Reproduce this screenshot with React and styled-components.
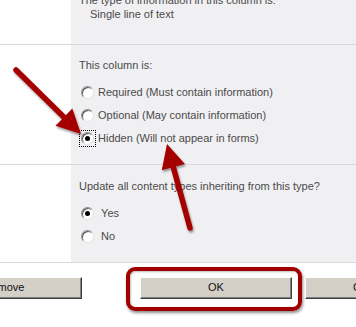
import React from "react";
import styled, { createGlobalStyle } from "styled-components";

const Global = createGlobalStyle`
  html, body { margin: 0; padding: 0; background: #fff; overflow: hidden; }
  body { font-family: "Liberation Sans", Tahoma, sans-serif; }
`;

const Page = styled.div`
  position: relative;
  width: 356px;
  height: 327px;
  overflow: hidden;
`;

const Scroll = styled.div`
  margin-top: -7px;
`;

const Section = styled.div`
  display: grid;
  grid-template-columns: 71px 1fr;
  height: ${(p) => p.$h}px;
  border-bottom: 1px solid #d9d9d9;
`;

const Side = styled.div`
  background: #fff;
`;

const Panel = styled.div`
  background: #f0f0f2;
  padding: ${(p) => p.$pt || 0}px 0 0 8px;
  font-size: 11px;
  color: #4a4a4a;
`;

const Line = styled.div`
  height: 14px;
  line-height: 14px;
  padding-left: ${(p) => p.$indent || 0}px;
  white-space: nowrap;
`;

const Options = styled.div`
  display: flex;
  flex-direction: column;
  gap: 9px;
  margin-top: ${(p) => p.$mt}px;
  padding-left: 2px;
`;

const Option = styled.label`
  display: flex;
  align-items: center;
  gap: 4px;
  height: 14px;
  white-space: nowrap;
`;

const Focus = styled.span`
  display: inline-flex;
  align-items: center;
  justify-content: center;
  width: 17px;
  height: 17px;
  margin: -2px;
  outline: ${(p) => (p.$focus ? "1px dotted #000" : "none")};
  outline-offset: -1px;
`;

const Radio = styled.span`
  position: relative;
  width: 11px;
  height: 11px;
  border-radius: 50%;
  border: 1px solid #8d8d8d;
  border-right-color: #e2e2e2;
  border-bottom-color: #e2e2e2;
  background: #fff;
  box-shadow: inset 1px 1px 0 #5a5a5a;
  &::after {
    content: "";
    display: ${(p) => (p.$on ? "block" : "none")};
    position: absolute;
    left: 3px;
    top: 3px;
    width: 5px;
    height: 5px;
    border-radius: 50%;
    background: #000;
  }
`;

const Buttons = styled.div`
  display: flex;
  padding-top: 14px;
  margin-left: -74px;
`;

const Button = styled.div`
  box-sizing: border-box;
  width: ${(p) => p.$w}px;
  margin-left: ${(p) => p.$ml || 0}px;
  height: 22px;
  line-height: 19px;
  text-align: center;
  font-size: 11px;
  color: #111;
  background: #d4d0c8;
  border: 1px solid #fff;
  border-right-color: #404040;
  border-bottom-color: #404040;
  box-shadow: inset -1px -1px 0 #808080;
  white-space: nowrap;
  overflow: hidden;
  flex-shrink: 0;
`;

const Highlight = styled.div`
  position: absolute;
  left: 126px;
  top: 267px;
  width: 176px;
  height: 44px;
  box-sizing: border-box;
  border: 4px solid #a10000;
  border-radius: 9px;
  box-shadow: 1px 2px 3px rgba(0, 0, 0, 0.45), inset 1px 1px 2px rgba(0, 0, 0, 0.25);
  pointer-events: none;
`;

const Overlay = styled.svg`
  position: absolute;
  left: 0;
  top: 0;
  pointer-events: none;
`;

const Arrow = ({ x1, y1, x2, y2 }) => {
  const dx = x2 - x1;
  const dy = y2 - y1;
  const len = Math.hypot(dx, dy);
  const ux = dx / len;
  const uy = dy / len;
  const hl = 24;
  const hw = 12;
  const bx = x2 - ux * hl;
  const by = y2 - uy * hl;
  const px = -uy * hw;
  const py = ux * hw;
  return (
    <g filter="url(#sh)">
      <line x1={x1} y1={y1} x2={bx + ux * 2} y2={by + uy * 2} stroke="#a50000" strokeWidth="5.5" strokeLinecap="round" />
      <polygon points={`${x2},${y2} ${bx + px},${by + py} ${bx - px},${by - py}`} fill="#a50000" />
    </g>
  );
};

export default function App() {
  return (
    <Page>
      <Global />
      <Scroll>
        <Section $h={51}>
          <Side />
          <Panel>
            <Line>The type of information in this column is:</Line>
            <Line $indent={11}>Single line of text</Line>
          </Panel>
        </Section>
        <Section $h={119}>
          <Side />
          <Panel $pt={13}>
            <Line>This column is:</Line>
            <Options $mt={13}>
              <Option><Focus><Radio /></Focus>Required (Must contain information)</Option>
              <Option><Focus><Radio /></Focus>Optional (May contain information)</Option>
              <Option><Focus $focus><Radio $on /></Focus>Hidden (Will not appear in forms)</Option>
            </Options>
          </Panel>
        </Section>
        <Section $h={97}>
          <Side />
          <Panel $pt={14}>
            <Line>Update all content types inheriting from this type?</Line>
            <Options $mt={13}>
              <Option><Focus><Radio $on /></Focus>&nbsp;Yes</Option>
              <Option><Focus><Radio /></Focus>&nbsp;No</Option>
            </Options>
          </Panel>
        </Section>
      </Scroll>
      <Buttons>
        <Button $w={156}>Remove</Button>
        <Button $w={152} $ml={58}>OK</Button>
        <Button $w={130} $ml={13}>Cancel</Button>
      </Buttons>
      <Highlight />
      <Overlay width="356" height="327">
        <defs>
          <filter id="sh" x="-20%" y="-20%" width="140%" height="140%">
            <feDropShadow dx="1" dy="2" stdDeviation="1.2" floodOpacity="0.4" />
          </filter>
        </defs>
        <Arrow x1={16} y1={70} x2={81} y2={134} />
        <Arrow x1={190} y1={228} x2={167} y2={144} />
      </Overlay>
    </Page>
  );
}
